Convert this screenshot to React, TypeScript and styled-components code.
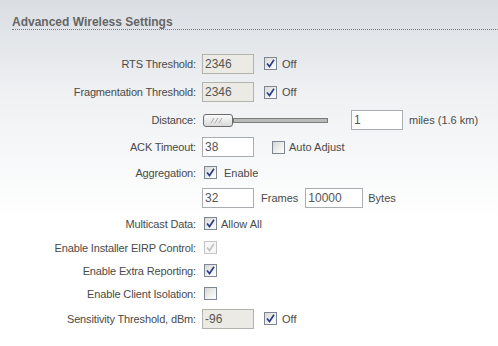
import * as React from "react";
import styled, { createGlobalStyle } from "styled-components";

const GlobalStyle = createGlobalStyle`
  html, body {
    margin: 0;
    padding: 0;
    width: 498px;
    height: 346px;
    overflow: hidden;
  }
  body {
    font-family: "Liberation Sans", Arial, sans-serif;
    font-size: 11px;
    color: #4a4a4a;
    background: linear-gradient(to bottom, #dadee3 0px, #eef0f2 90px, #ffffff 220px);
  }
`;

const Page = styled.div`
  width: 498px;
  height: 346px;
`;

const Header = styled.h2`
  margin: 0 0 19px 12px;
  padding: 15px 0 0 0;
  font-size: 12px;
  line-height: 14px;
  font-weight: bold;
  color: #666;
  border-bottom: 1px dotted #777;
`;

const Form = styled.div`
  display: flex;
  flex-direction: column;
`;

const Row = styled.div<{ h: number }>`
  display: grid;
  grid-template-columns: 196px 1fr;
  column-gap: 6px;
  align-items: center;
  height: ${({ h }) => h}px;
`;

const Label = styled.div`
  text-align: right;
  white-space: nowrap;
  letter-spacing: -0.15px;
`;

const Value = styled.div`
  display: flex;
  align-items: center;
  white-space: nowrap;
`;

const TextInput = styled.div<{ w?: number; disabled?: boolean; ml?: number }>`
  box-sizing: border-box;
  width: ${({ w }) => w ?? 52}px;
  height: 20px;
  margin-left: ${({ ml }) => ml ?? 0}px;
  padding: 0 2px;
  border: 1px solid ${({ disabled }) => (disabled ? "#b3b3ae" : "#a9acb0")};
  background: ${({ disabled }) => (disabled ? "#ebeae4" : "#ffffff")};
  font-size: 12px;
  line-height: 18px;
  color: #555;
`;

const Text = styled.span<{ ml?: number }>`
  margin-left: ${({ ml }) => ml ?? 0}px;
`;

const Box = styled.span<{ disabled?: boolean; ml?: number }>`
  box-sizing: border-box;
  display: inline-flex;
  align-items: center;
  justify-content: center;
  width: 13px;
  height: 13px;
  margin-left: ${({ ml }) => ml ?? 2}px;
  border: 1px solid ${({ disabled }) => (disabled ? "#c4c4c4" : "#7d8794")};
  background: ${({ disabled }) =>
    disabled
      ? "#f7f7f7"
      : "linear-gradient(135deg, #d6d6d2 0%, #efefed 55%, #ffffff 100%)"};
`;

const Check = ({ checked, disabled, ml }: { checked?: boolean; disabled?: boolean; ml?: number }) => (
  <Box disabled={disabled} ml={ml}>
    {checked && (
      <svg width="9" height="9" viewBox="0 0 9 9">
        <path
          d="M1 4.5 L3.5 7.5 L8 0.8"
          fill="none"
          stroke={disabled ? "#c2c2c2" : "#2c3f8c"}
          strokeWidth="1.7"
        />
      </svg>
    )}
  </Box>
);

const Slider = styled.div`
  display: flex;
  align-items: center;
  margin-left: 1px;
`;

const Thumb = styled.div`
  box-sizing: border-box;
  width: 30px;
  height: 13px;
  border: 1px solid #6b6b6b;
  border-radius: 3px;
  background: linear-gradient(to bottom, #fbfbfb, #d9d9d9);
  display: flex;
  align-items: center;
  padding-left: 6px;
`;

const Track = styled.div`
  box-sizing: border-box;
  width: 95px;
  height: 5px;
  border: 1px solid #7c7c7c;
  background: #b8bbb8;
`;

const Stripes = () => (
  <svg width="14" height="7" viewBox="0 0 14 7">
    <path d="M1 6 L4 1 M5 6 L8 1 M9 6 L12 1" stroke="#aaa" strokeWidth="1" fill="none" />
  </svg>
);

export default function App() {
  return (
    <Page>
      <GlobalStyle />
      <Header>Advanced Wireless Settings</Header>
      <Form>
        <Row h={29}>
          <Label>RTS Threshold:</Label>
          <Value>
            <TextInput disabled>2346</TextInput>
            <Check checked ml={10} />
            <Text ml={5}>Off</Text>
          </Value>
        </Row>
        <Row h={28}>
          <Label>Fragmentation Threshold:</Label>
          <Value>
            <TextInput disabled>2346</TextInput>
            <Check checked ml={10} />
            <Text ml={5}>Off</Text>
          </Value>
        </Row>
        <Row h={28}>
          <Label>Distance:</Label>
          <Value>
            <Slider>
              <Thumb>
                <Stripes />
              </Thumb>
              <Track />
            </Slider>
            <TextInput ml={23}>1</TextInput>
            <Text ml={6}>miles (1.6 km)</Text>
          </Value>
        </Row>
        <Row h={26}>
          <Label>ACK Timeout:</Label>
          <Value>
            <TextInput>38</TextInput>
            <Check ml={18} />
            <Text ml={4}>Auto Adjust</Text>
          </Value>
        </Row>
        <Row h={25}>
          <Label>Aggregation:</Label>
          <Value>
            <Check checked />
            <Text ml={7}>Enable</Text>
          </Value>
        </Row>
        <Row h={26}>
          <Label />
          <Value>
            <TextInput>32</TextInput>
            <Text ml={7}>Frames</Text>
            <TextInput w={58} ml={7}>10000</TextInput>
            <Text ml={5}>Bytes</Text>
          </Value>
        </Row>
        <Row h={25}>
          <Label>Multicast Data:</Label>
          <Value>
            <Check checked />
            <Text ml={4}>Allow All</Text>
          </Value>
        </Row>
        <Row h={23}>
          <Label>Enable Installer EIRP Control:</Label>
          <Value>
            <Check checked disabled />
          </Value>
        </Row>
        <Row h={23}>
          <Label>Enable Extra Reporting:</Label>
          <Value>
            <Check checked />
          </Value>
        </Row>
        <Row h={23}>
          <Label>Enable Client Isolation:</Label>
          <Value>
            <Check />
          </Value>
        </Row>
        <Row h={27}>
          <Label>Sensitivity Threshold, dBm:</Label>
          <Value>
            <TextInput disabled>-96</TextInput>
            <Check checked ml={10} />
            <Text ml={5}>Off</Text>
          </Value>
        </Row>
      </Form>
    </Page>
  );
}
